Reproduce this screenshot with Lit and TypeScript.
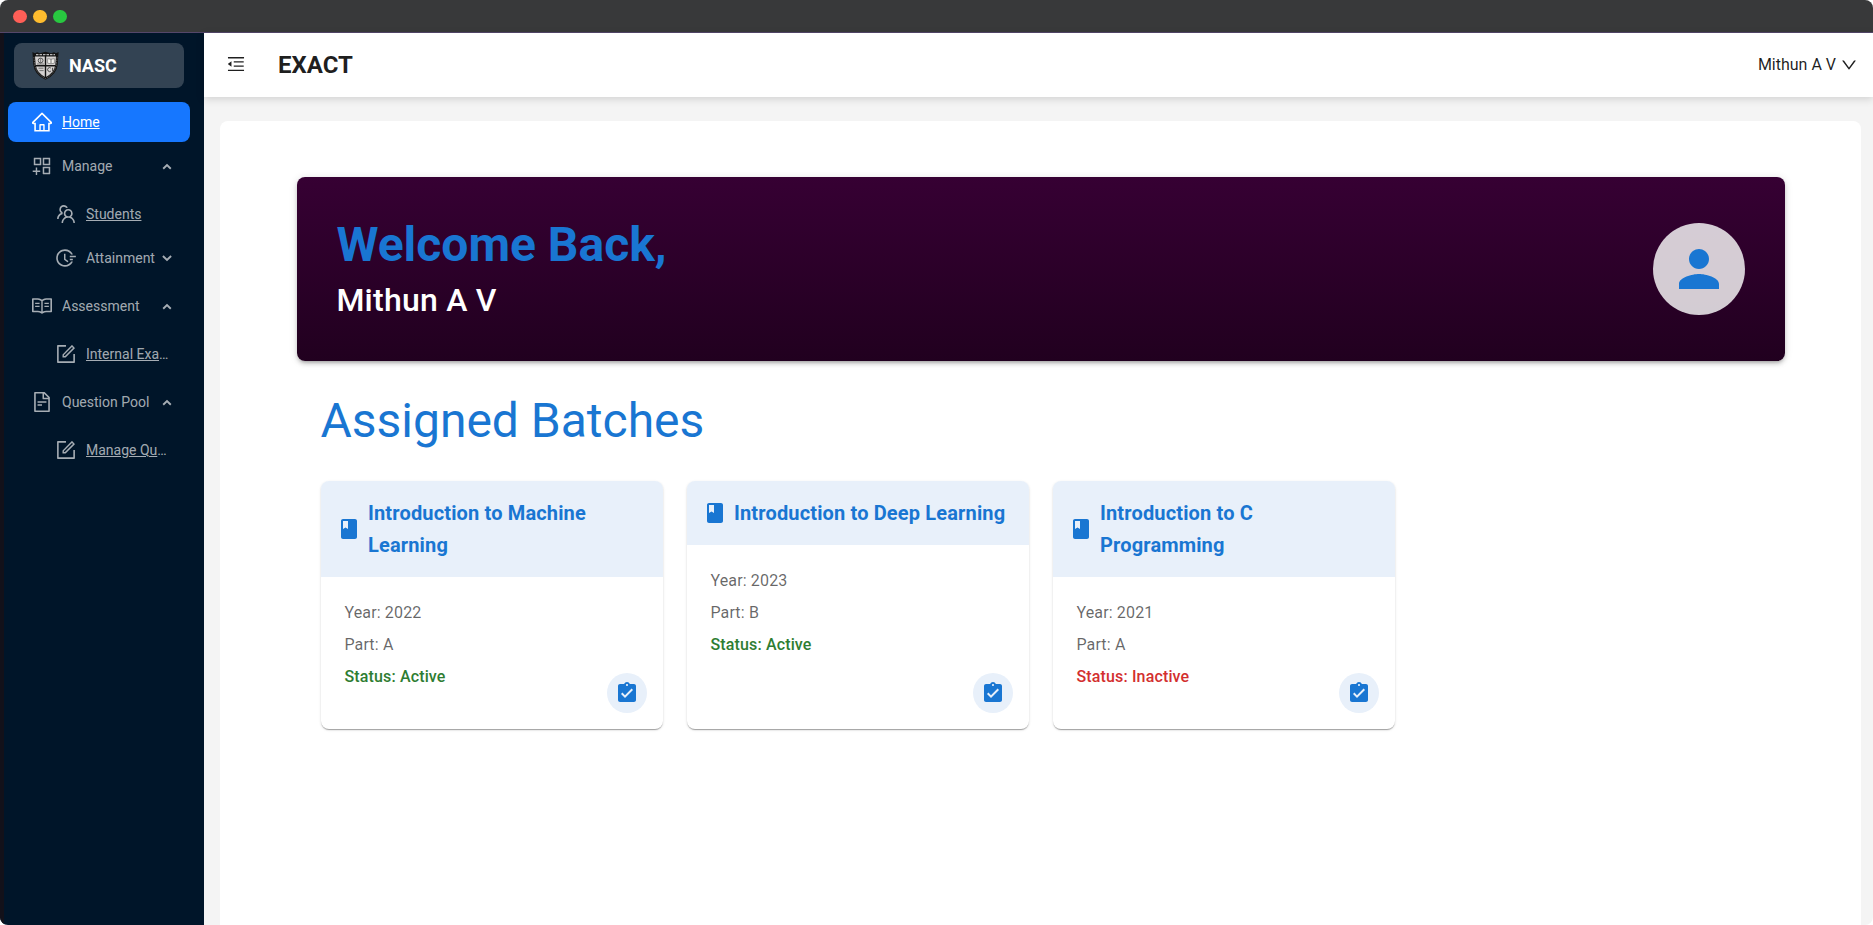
import { LitElement, html, css, svg } from "lit";
import { customElement, property } from "lit/decorators.js";
import { classMap } from "lit/directives/class-map.js";

const ICONS: Record<string, string> = {
  home: "M946.5 505L560.1 118.8l-25.9-25.9a31.5 31.5 0 00-44.4 0L77.5 505a63.9 63.9 0 00-18.8 46c.4 35.2 29.7 63.3 64.9 63.3h42.5V940h691.8V614.3h43.4c17.1 0 33.2-6.7 45.3-18.8a63.6 63.6 0 0018.7-45.3c0-17-6.7-33.1-18.8-45.2zM568 868H456V664h112v204zm217.9-325.7V868H632V640c0-22.1-17.9-40-40-40H432c-22.1 0-40 17.9-40 40v228H238.1V542.3h-96l370-369.7 23.1 23.1L882 542.3h-96.1z",
  manage: "M464 144H160c-8.8 0-16 7.2-16 16v304c0 8.8 7.2 16 16 16h304c8.8 0 16-7.2 16-16V160c0-8.8-7.2-16-16-16zm-52 268H212V212h200v200zm452-268H560c-8.8 0-16 7.2-16 16v304c0 8.8 7.2 16 16 16h304c8.8 0 16-7.2 16-16V160c0-8.8-7.2-16-16-16zm-52 268H612V212h200v200zm52 132H560c-8.8 0-16 7.2-16 16v304c0 8.8 7.2 16 16 16h304c8.8 0 16-7.2 16-16V560c0-8.8-7.2-16-16-16zm-52 268H612V612h200v200zM424 712H296V584c0-4.4-3.6-8-8-8h-48c-4.4 0-8 3.6-8 8v128H104c-4.4 0-8 3.6-8 8v48c0 4.4 3.6 8 8 8h128v128c0 4.4 3.6 8 8 8h48c4.4 0 8-3.6 8-8V776h128c4.4 0 8-3.6 8-8v-48c0-4.4-3.6-8-8-8z",
  team: "M824.2 699.9a301.55 301.55 0 00-86.4-60.4C783.1 602.8 812 546.8 812 484c0-110.8-92.4-201.7-203.2-200-109.1 1.7-197 90.6-197 200 0 62.8 29 118.8 74.2 155.5a300.95 300.95 0 00-86.4 60.4C345 754.6 314 826.8 312 903.8a8 8 0 008 8.2h56c4.3 0 7.9-3.4 8-7.7 1.9-58 25.4-112.3 66.7-153.5A226.62 226.62 0 01612 684c60.9 0 118.2 23.7 161.3 66.8C814.6 792 838 846.3 840 904.3c.1 4.3 3.7 7.7 8 7.7h56a8 8 0 008-8.2c-2-77-33-149.2-87.8-203.9zM612 612c-34.2 0-66.4-13.3-90.5-37.5a126.86 126.86 0 01-37.5-91.8c.3-32.8 13.4-64.5 36.3-88 24-24.6 56.1-38.3 90.4-38.7 33.9-.3 66.8 12.9 91 36.6 24.8 24.3 38.4 56.8 38.4 91.4 0 34.2-13.3 66.3-37.5 90.5A127.3 127.3 0 01612 612zM361.5 510.4c-.9-8.7-1.4-17.5-1.4-26.4 0-15.9 1.5-31.4 4.3-46.5.7-3.6-1.2-7.3-4.5-8.8-13.6-6.1-26.1-14.5-36.9-25.1a127.54 127.54 0 01-38.7-95.4c.9-32.1 13.8-62.6 36.3-85.6 24.7-25.3 57.9-39.1 93.2-38.7 31.9.3 62.7 12.6 86 34.4 7.9 7.4 14.7 15.6 20.4 24.4 2 3.1 5.9 4.4 9.3 3.2 17.6-6.1 36.2-10.4 55.3-12.4 5.6-.6 8.8-6.6 6.3-11.6-32.5-64.3-98.9-108.7-175.7-109.9-110.9-1.7-203.3 89.2-203.3 199.9 0 62.8 28.9 118.8 74.2 155.5-31.8 14.7-61.1 35-86.5 60.4-54.8 54.7-85.8 126.9-87.8 204a8 8 0 008 8.2h56.1c4.3 0 7.9-3.4 8-7.7 1.9-58 25.4-112.3 66.7-153.5 29.4-29.4 65.4-49.8 104.7-59.7 3.9-1 6.5-4.7 6-8.7z",
  time: "M945 412H689c-4.4 0-8 3.6-8 8v48c0 4.4 3.6 8 8 8h256c4.4 0 8-3.6 8-8v-48c0-4.4-3.6-8-8-8zM811 548H689c-4.4 0-8 3.6-8 8v48c0 4.4 3.6 8 8 8h122c4.4 0 8-3.6 8-8v-48c0-4.4-3.6-8-8-8zM477.3 322.5H434c-6.2 0-11.2 5-11.2 11.2v248c0 3.6 1.7 6.9 4.6 9l148.9 108.6c5 3.6 12 2.6 15.6-2.4l25.7-35.1v-.1c3.6-5 2.5-12-2.5-15.6l-126.7-91.6V333.7c.1-6.2-5-11.2-11.1-11.2z M804.8 673.9H747c-5.6 0-10.9 2.9-13.9 7.7a321 321 0 01-44.5 55.7 317.17 317.17 0 01-101.3 68.3c-39.3 16.6-81 25-124 25-43.1 0-84.8-8.4-124-25-37.9-16-72-39-101.3-68.3s-52.3-63.4-68.3-101.3c-16.6-39.2-25-80.9-25-124 0-43.1 8.4-84.7 25-124 16-37.9 39-72 68.3-101.3 29.3-29.3 63.4-52.3 101.3-68.3 39.2-16.6 81-25 124-25 43.1 0 84.8 8.4 124 25 37.9 16 72 39 101.3 68.3a321 321 0 0144.5 55.7c3 4.8 8.3 7.7 13.9 7.7h57.8c6.9 0 11.3-7.2 8.2-13.3-65.2-129.7-197.4-214-345-215.7-216.1-2.7-395.6 174.2-396 390.1C71.6 727.5 246.9 903 463.3 903c149.5 0 283.9-84.6 349.8-215.8a9.18 9.18 0 00-8.3-13.3z",
  read: "M928 161H699.2c-49.1 0-97.1 14.1-138.4 40.7L512 233l-48.8-31.3A255.2 255.2 0 00324.8 161H96c-17.7 0-32 14.3-32 32v568c0 17.7 14.3 32 32 32h228.8c49.1 0 97.1 14.1 138.4 40.7l44.4 28.6c1.3.8 2.8 1.3 4.3 1.3s3-.4 4.3-1.3l44.4-28.6C602 807.1 650.1 793 699.2 793H928c17.7 0 32-14.3 32-32V193c0-17.7-14.3-32-32-32zM324.8 721H136V233h188.8c35.4 0 69.8 10.1 99.5 29.2l48.8 31.3 6.9 4.5v462c-47.6-25.6-100.8-39-155.2-39zm563.2 0H699.2c-54.4 0-107.6 13.4-155.2 39V298l6.9-4.5 48.8-31.3c29.7-19.1 64.1-29.2 99.5-29.2H888v488zM396.9 361H211.1c-3.9 0-7.1 3.4-7.1 7.5v45c0 4.1 3.2 7.5 7.1 7.5h185.7c3.9 0 7.1-3.4 7.1-7.5v-45c.1-4.1-3.1-7.5-7-7.5zm223.1 7.5v45c0 4.1 3.2 7.5 7.1 7.5h185.7c3.9 0 7.1-3.4 7.1-7.5v-45c0-4.1-3.2-7.5-7.1-7.5H627.1c-3.9 0-7.1 3.4-7.1 7.5zM396.9 501H211.1c-3.9 0-7.1 3.4-7.1 7.5v45c0 4.1 3.2 7.5 7.1 7.5h185.7c3.9 0 7.1-3.4 7.1-7.5v-45c.1-4.1-3.1-7.5-7-7.5zm416 0H627.1c-3.9 0-7.1 3.4-7.1 7.5v45c0 4.1 3.2 7.5 7.1 7.5h185.7c3.9 0 7.1-3.4 7.1-7.5v-45c.1-4.1-3.1-7.5-7-7.5z",
  form: "M904 512h-56c-4.4 0-8 3.6-8 8v320H184V184h320c4.4 0 8-3.6 8-8v-56c0-4.4-3.6-8-8-8H144c-17.7 0-32 14.3-32 32v736c0 17.7 14.3 32 32 32h736c17.7 0 32-14.3 32-32V520c0-4.4-3.6-8-8-8z M355.9 534.9L354 653.8c-.1 8.9 7.1 16.2 16 16.2h.4l118-2.9c2-.1 4-.9 5.4-2.3l415.9-415c3.1-3.1 3.1-8.2 0-11.3L785.4 114.3c-1.6-1.6-3.6-2.3-5.7-2.3s-4.1.8-5.7 2.3l-415.8 415a8.3 8.3 0 00-2.3 5.6zm63.5 23.6L779.7 199l45.2 45.1-360.5 359.7-45.7 1.1.7-46.4z",
  file: "M854.6 288.6L639.4 73.4c-6-6-14.1-9.4-22.6-9.4H192c-17.7 0-32 14.3-32 32v832c0 17.7 14.3 32 32 32h640c17.7 0 32-14.3 32-32V311.3c0-8.5-3.4-16.7-9.4-22.7zM790.2 326H602V137.8L790.2 326zm1.8 562H232V136h302v216a42 42 0 0042 42h216v494zM504 618H320c-4.4 0-8 3.6-8 8v48c0 4.4 3.6 8 8 8h184c4.4 0 8-3.6 8-8v-48c0-4.4-3.6-8-8-8zM312 490v48c0 4.4 3.6 8 8 8h384c4.4 0 8-3.6 8-8v-48c0-4.4-3.6-8-8-8H320c-4.4 0-8 3.6-8 8z",
  fold: "M408 442h480c4.4 0 8-3.6 8-8v-56c0-4.4-3.6-8-8-8H408c-4.4 0-8 3.6-8 8v56c0 4.4 3.6 8 8 8zm-8 204c0 4.4 3.6 8 8 8h480c4.4 0 8-3.6 8-8v-56c0-4.4-3.6-8-8-8H408c-4.4 0-8 3.6-8 8v56zm504-486H120c-4.4 0-8 3.6-8 8v56c0 4.4 3.6 8 8 8h784c4.4 0 8-3.6 8-8v-56c0-4.4-3.6-8-8-8zm0 632H120c-4.4 0-8 3.6-8 8v56c0 4.4 3.6 8 8 8h784c4.4 0 8-3.6 8-8v-56c0-4.4-3.6-8-8-8zM115.4 518.9L271.7 642c5.8 4.6 14.4.5 14.4-6.9V388.9c0-7.4-8.5-11.5-14.4-6.9L115.4 505.1a8.74 8.74 0 000 13.8z",
  down: "M884 256h-75c-5.1 0-9.9 2.5-12.9 6.6L512 654.2 227.9 262.6c-3-4.1-7.8-6.6-12.9-6.6h-75c-6.5 0-10.3 7.4-6.5 12.7l352.6 486.1c12.8 17.6 39 17.6 51.7 0l352.6-486.1c3.9-5.3.1-12.7-6.4-12.7z",
};

const icon = (name: string, cls: string) => html`
  <svg class=${cls} viewBox="64 64 896 896" fill="currentColor">${svg`<path d=${ICONS[name]} />`}</svg>
`;

interface MenuEntry {
  label: string;
  icon: string;
  kind: "link" | "group";
  nested?: boolean;
  active?: boolean;
  cut?: boolean;
  arrow?: "up" | "down";
}

const MENU: MenuEntry[] = [
  { label: "Home", icon: "home", kind: "link", active: true },
  { label: "Manage", icon: "manage", kind: "group", arrow: "up" },
  { label: "Students", icon: "team", kind: "link", nested: true },
  { label: "Attainment", icon: "time", kind: "group", nested: true, arrow: "down" },
  { label: "Assessment", icon: "read", kind: "group", arrow: "up" },
  { label: "Internal Exa", icon: "form", kind: "link", nested: true, cut: true },
  { label: "Question Pool", icon: "file", kind: "group", arrow: "up" },
  { label: "Manage Qu", icon: "form", kind: "link", nested: true, cut: true },
];

@customElement("side-menu")
export class SideMenu extends LitElement {
  static styles = css`
    :host {
      display: block;
      box-sizing: border-box;
      width: 204px;
      flex: none;
      background: #001529;
      border-left: 4px solid #12111a;
      font-family: Roboto, sans-serif;
    }
    .brand {
      display: flex;
      align-items: center;
      height: 45px;
      margin: 10px 20px 14px 10px;
      padding-left: 18px;
      box-sizing: border-box;
      gap: 10px;
      border-radius: 8px;
      background: rgba(255, 255, 255, 0.2);
      color: #fff;
      font-size: 18px;
      font-weight: 700;
    }
    .crest {
      width: 27px;
      height: 29px;
      flex: none;
    }
    .item {
      display: flex;
      align-items: center;
      box-sizing: border-box;
      height: 40px;
      margin: 0 14px 4px 4px;
      padding: 0 18px 0 24px;
      border-radius: 8px;
      color: rgba(255, 255, 255, 0.65);
      font-size: 14px;
      line-height: 22px;
    }
    .item.group,
    .item.nested {
      margin-bottom: 8px;
    }
    .item.nested {
      padding-left: 48px;
    }
    .item.nested.link:not(.cut) {
      margin-bottom: 4px;
    }
    .item.active {
      background: #1677ff;
      color: #fff;
    }
    .glyph {
      width: 20px;
      height: 20px;
      flex: none;
      margin-right: 10px;
    }
    .label {
      white-space: nowrap;
    }
    .link .text {
      text-decoration: underline;
    }
    .chevron {
      width: 10px;
      height: 8px;
      flex: none;
      margin-left: auto;
    }
  `;

  render() {
    return html`
      <div class="brand">
        <svg class="crest" viewBox="0 0 27 29">
          <path d="M.4 1L3 2.200 5 1.200 8 2.200 13.500.8 19 2.200 22 1.200 24 2.200 26.600 1 25.800 13Q25 23.500 13.500 28.800Q2 23.500 1.200 13Z" fill="#141414" />
          <path d="M3 5.600H24L23.300 14Q22 22 13.500 26.200Q5 22 3.700 14Z" fill="#d4d1d0" />
          <path d="M4 3.700H23" stroke="#b5b5b5" stroke-width="1.200" stroke-dasharray="2.500 1" />
          <path d="M1.900 6L2.700 14Q4.500 23 13.500 27.500Q22.500 23 24.300 14L25.100 6" fill="none" stroke="#8d8b8a" stroke-width=".6" stroke-dasharray="1.500 1" />
          <path d="M13.500 4.500V27M3.400 14.800H23.600" stroke="#141414" stroke-width="1.400" />
          <circle cx="8.600" cy="9.500" r="2.400" fill="none" stroke="#555" stroke-width="1" />
          <path d="M5 13H12M8.600 7V12.600" stroke="#666" stroke-width=".8" />
          <path d="M15.600 7.600L19 8.200L22.400 7.600V12.200L19 12.800L15.600 12.200Z" fill="#f2f0ec" stroke="#777" stroke-width=".7" />
          <path d="M19 8V12.500M6.500 17.200H11.400M7.500 19.600H11.600" stroke="#666" stroke-width=".9" />
          <path d="M18.800 17A2 2 0 1 0 18.800 20.200M20.600 16.800V20" fill="none" stroke="#444" stroke-width="1" />
        </svg>
        <span>NASC</span>
      </div>
      ${MENU.map(
        (m) => html`
          <div class=${classMap({ item: true, [m.kind]: true, nested: !!m.nested, active: !!m.active, cut: !!m.cut })}>
            ${icon(m.icon, "glyph")}
            <span class="label"><span class="text">${m.label}</span>${m.cut ? "…" : ""}</span>
            ${m.arrow
              ? html`<svg class="chevron" viewBox="0 0 10 8" fill="none" stroke="currentColor" stroke-width="1.9">
                  ${m.arrow === "up" ? svg`<path d="M1.200 6.700L5 3.100L8.800 6.700" />` : svg`<path d="M.9 2L5 5.900L9.100 2" />`}
                </svg>`
              : ""}
          </div>
        `
      )}
    `;
  }
}

@customElement("batch-card")
export class BatchCard extends LitElement {
  @property() name = "";
  @property() year = "";
  @property() part = "";
  @property() status = "";

  static styles = css`
    :host {
      display: flex;
      flex-direction: column;
      box-sizing: border-box;
      width: 342px;
      height: 248px;
      position: relative;
      border-radius: 8px;
      overflow: hidden;
      background: #fff;
      box-shadow: 0 2px 1px -1px rgba(0, 0, 0, 0.2), 0 1px 1px 0 rgba(0, 0, 0, 0.14), 0 1px 3px 0 rgba(0, 0, 0, 0.12);
      font-family: Roboto, sans-serif;
    }
    .head {
      display: flex;
      align-items: center;
      gap: 7px;
      padding: 16px;
      background: #e8f0fa;
      color: #1976d2;
    }
    .book {
      width: 24px;
      height: 24px;
      flex: none;
    }
    .title {
      font-size: 20px;
      font-weight: 700;
      line-height: 32px;
      letter-spacing: 0.15px;
    }
    .body {
      padding: 24px 24px 24px 23.4px;
      display: flex;
      flex-direction: column;
      gap: 8px;
      color: rgba(0, 0, 0, 0.6);
      font-size: 16px;
      line-height: 24px;
      letter-spacing: 0.15px;
    }
    .status {
      font-weight: 500;
      color: #2e7d32;
    }
    .status.off {
      color: #d32f2f;
    }
    .action {
      position: absolute;
      right: 16px;
      bottom: 16px;
      width: 40px;
      height: 40px;
      border-radius: 50%;
      background: #e8f0fa;
      color: #1976d2;
      display: grid;
      place-items: center;
    }
  `;

  render() {
    return html`
      <div class="head">
        <svg class="book" viewBox="0 0 24 24" fill="currentColor">
          <path d="M18 2H6c-1.1 0-2 .9-2 2v16c0 1.1.9 2 2 2h12c1.1 0 2-.9 2-2V4c0-1.1-.9-2-2-2zM6 4h5v8l-2.500-1.500L6 12V4z" />
        </svg>
        <div class="title">${this.name}</div>
      </div>
      <div class="body">
        <div>Year: ${this.year}</div>
        <div>Part: ${this.part}</div>
        <div class=${classMap({ status: true, off: this.status !== "Active" })}>Status: ${this.status}</div>
      </div>
      <div class="action">
        <svg width="24" height="24" viewBox="0 0 24 24" fill="currentColor">
          <path d="M19 3h-4.180C14.400 1.840 13.300 1 12 1c-1.300 0-2.400.84-2.820 2H5c-1.100 0-2 .9-2 2v14c0 1.100.9 2 2 2h14c1.100 0 2-.9 2-2V5c0-1.100-.9-2-2-2zm-7 0c.55 0 1 .45 1 1s-.45 1-1 1-1-.45-1-1 .45-1 1-1zm-2 14l-4-4 1.410-1.410L10 14.170l6.590-6.590L18 9l-8 8z" />
        </svg>
      </div>
    `;
  }
}

const BATCHES = [
  { name: "Introduction to Machine Learning", year: "2022", part: "A", status: "Active" },
  { name: "Introduction to Deep Learning", year: "2023", part: "B", status: "Active" },
  { name: "Introduction to C Programming", year: "2021", part: "A", status: "Inactive" },
];

@customElement("app-root")
export class AppRoot extends LitElement {
  static styles = css`
    :host {
      display: flex;
      flex-direction: column;
      height: 925px;
      overflow: hidden;
      background: #f4f4f4;
      border-radius: 8px;
      font-family: Roboto, sans-serif;
      color: rgba(0, 0, 0, 0.88);
    }
    .titlebar {
      display: flex;
      align-items: center;
      gap: 6.6px;
      box-sizing: border-box;
      height: 33px;
      flex: none;
      padding: 1px 0 0 13.3px;
      background: #38393a;
      border-bottom: 1px solid #54476a;
    }
    .dot {
      width: 13.4px;
      height: 13.4px;
      border-radius: 50%;
    }
    .red { background: #ff5f57; }
    .amber { background: #febc2e; }
    .green { background: #28c840; }
    .shell {
      display: flex;
      flex: 1;
      min-height: 0;
    }
    .main {
      flex: 1;
      min-width: 0;
      display: flex;
      flex-direction: column;
    }
    .header {
      display: flex;
      align-items: center;
      height: 64px;
      flex: none;
      box-sizing: border-box;
      padding: 0 16px 0 23px;
      background: #fff;
      box-shadow: 0 2px 8px rgba(0, 0, 0, 0.15);
    }
    .fold {
      width: 18px;
      height: 18px;
      margin-top: -2px;
    }
    .app {
      margin-left: 33px;
      font-size: 24px;
      font-weight: 700;
    }
    .user {
      margin-left: auto;
      display: flex;
      align-items: center;
      gap: 5px;
      font-size: 16px;
    }
    .user span {
      padding-bottom: 2px;
    }
    .caret {
      width: 16px;
      height: 16px;
    }
    .panel {
      flex: 1;
      margin: 24px 12px 0 16px;
      padding: 56px 76px 0 77px;
      background: #fff;
      border-radius: 8px 8px 0 0;
    }
    .banner {
      display: flex;
      align-items: center;
      justify-content: space-between;
      box-sizing: border-box;
      height: 184px;
      padding: 40px 40px 40px 39.4px;
      border-radius: 8px;
      background: linear-gradient(#360033, #21001f);
      box-shadow: 0 3px 3px -2px rgba(0, 0, 0, 0.2), 0 3px 4px 0 rgba(0, 0, 0, 0.14), 0 1px 8px 0 rgba(0, 0, 0, 0.12);
    }
    .welcome {
      font-size: 48px;
      font-weight: 700;
      line-height: 56px;
      margin-bottom: 7px;
      color: #1976d2;
    }
    .name {
      font-size: 32px;
      font-weight: 500;
      line-height: 40px;
      padding-bottom: 1px;
      letter-spacing: 0.24px;
      color: #fff;
    }
    .avatar {
      width: 92px;
      height: 92px;
      border-radius: 50%;
      background: rgba(255, 255, 255, 0.8);
      color: #1976d2;
      display: grid;
      place-items: center;
    }
    .heading {
      margin: 32px 24px 32px 23.4px;
      font-size: 48px;
      line-height: 56px;
      color: #1976d2;
    }
    .cards {
      display: flex;
      gap: 24px;
      margin: 0 24px;
    }
  `;

  render() {
    return html`
      <div class="titlebar">
        <span class="dot red"></span><span class="dot amber"></span><span class="dot green"></span>
      </div>
      <div class="shell">
        <side-menu></side-menu>
        <div class="main">
          <div class="header">
            ${icon("fold", "fold")}
            <div class="app">EXACT</div>
            <div class="user"><span>Mithun A V</span>${icon("down", "caret")}</div>
          </div>
          <div class="panel">
            <div class="banner">
              <div>
                <div class="welcome">Welcome Back,</div>
                <div class="name">Mithun A V</div>
              </div>
              <div class="avatar">
                <svg width="60" height="60" viewBox="0 0 24 24" fill="currentColor">
                  <path d="M12 12c2.210 0 4-1.790 4-4s-1.790-4-4-4-4 1.790-4 4 1.790 4 4 4zm0 2c-2.670 0-8 1.340-8 4v2h16v-2c0-2.660-5.330-4-8-4z" />
                </svg>
              </div>
            </div>
            <div class="heading">Assigned Batches</div>
            <div class="cards">
              ${BATCHES.map(
                (b) => html`<batch-card .name=${b.name} .year=${b.year} .part=${b.part} .status=${b.status}></batch-card>`
              )}
            </div>
          </div>
        </div>
      </div>
    `;
  }
}
